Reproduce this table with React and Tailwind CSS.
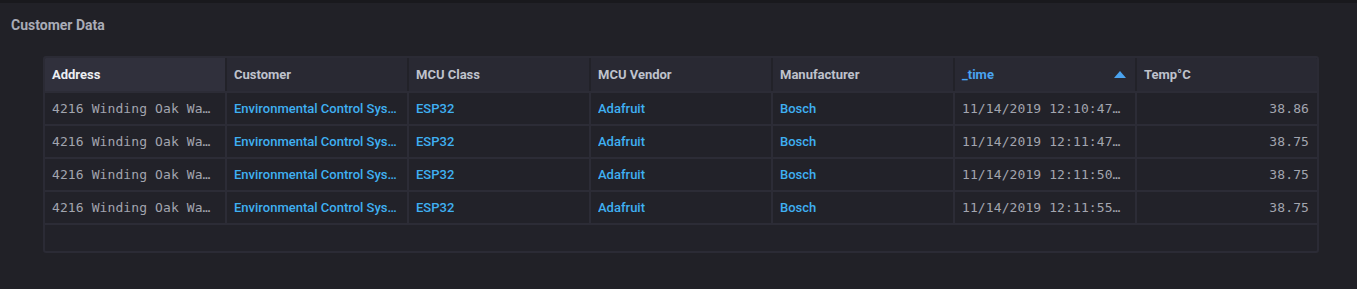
import React from "react";

const columns = [
  { key: "address", title: "Address", mono: true },
  { key: "customer", title: "Customer", link: true },
  { key: "mcuClass", title: "MCU Class", link: true },
  { key: "mcuVendor", title: "MCU Vendor", link: true },
  { key: "manufacturer", title: "Manufacturer", link: true },
  { key: "time", title: "_time", mono: true, sorted: true },
  { key: "temp", title: "Temp°C", mono: true, right: true },
];

const rows = [
  { time: "11/14/2019 12:10:47…", temp: "38.86" },
  { time: "11/14/2019 12:11:47…", temp: "38.75" },
  { time: "11/14/2019 12:11:50…", temp: "38.75" },
  { time: "11/14/2019 12:11:55…", temp: "38.75" },
].map((r) => ({
  address: "4216 Winding Oak Wa…",
  customer: "Environmental Control Sys…",
  mcuClass: "ESP32",
  mcuVendor: "Adafruit",
  manufacturer: "Bosch",
  ...r,
}));

function HeaderCell({ col }) {
  const bg = col.key === "address" ? "bg-[#30303c]" : "bg-[#292933]";
  const color = col.key === "address" ? "text-[#eceef2]" : col.sorted ? "text-[#4aa3f0]" : "text-[#bfc2cc]";
  return (
    <div className={`${bg} h-[33px] flex items-center justify-between pl-[7px] pr-[9px]`}>
      <span className={`${color} text-[13px] font-bold`}>{col.title}</span>
      {col.sorted && (
        <svg width="12" height="7" viewBox="0 0 12 7">
          <path d="M6 0 L12 7 L0 7 Z" fill="#4aa3f0" />
        </svg>
      )}
    </div>
  );
}

function Cell({ col, value }) {
  let cls = "text-[13px] whitespace-nowrap overflow-hidden";
  if (col.mono) cls += " text-[#a2a5af] font-['DejaVu_Sans_Mono',monospace] text-[12.8px] tracking-[0.1px]";
  if (col.link) cls += " text-[#3fb0f2] font-medium";
  return (
    <div className={`bg-[#222229] h-[31px] flex items-center pl-[7px] pr-[8px] ${col.right ? "justify-end" : ""}`}>
      <span className={cls}>{value}</span>
    </div>
  );
}

export default function App() {
  return (
    <div className="h-[289px] bg-[#212127] font-['Roboto',sans-serif] overflow-hidden">
      <div className="h-[3px] bg-[#19191d]" />
      <div className="pl-[11px] pt-[14px] text-[14px] leading-[16px] font-bold text-[#a9acb7]">
        Customer Data
      </div>
      <div className="ml-[43px] mr-[38px] mt-[23px] h-[197px] border-2 border-[#2b2b35] rounded-[3px] bg-[#222229] overflow-hidden">
        <div className="grid grid-cols-7 gap-x-[2px] bg-[#222229]">
          {columns.map((c) => (
            <HeaderCell key={c.key} col={c} />
          ))}
        </div>
        <div className="grid grid-cols-7 gap-[2px] bg-[#2c2c36] pt-[2px] pb-[2px]">
          {rows.map((r, i) =>
            columns.map((c) => <Cell key={c.key + i} col={c} value={r[c.key]} />)
          )}
        </div>
      </div>
    </div>
  );
}
